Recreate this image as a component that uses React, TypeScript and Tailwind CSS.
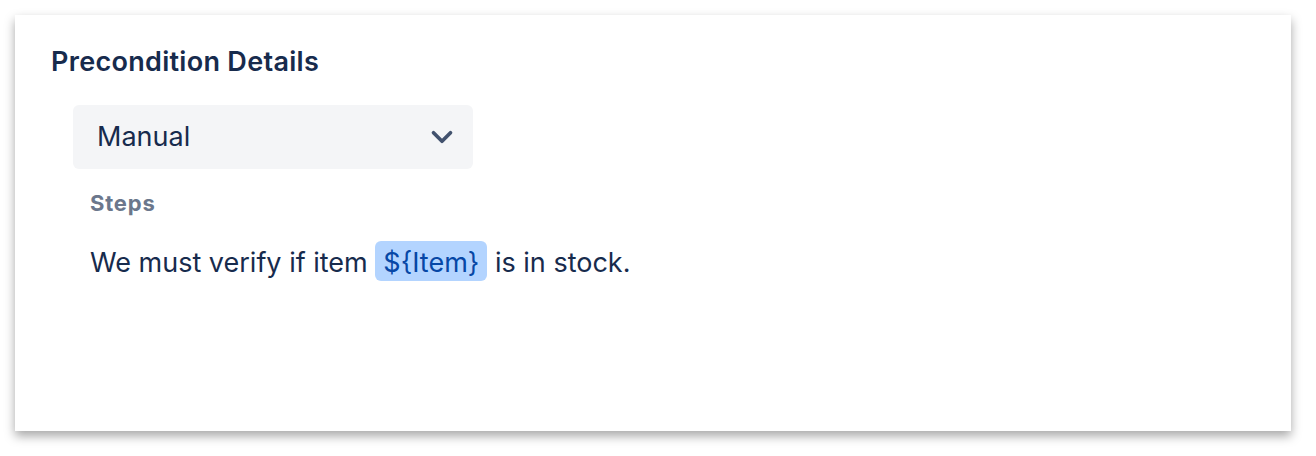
import { ChevronDown } from 'lucide-react';

export default function App() {
    return (
        <div className="w-[1316px] h-[456px] bg-white p-[15px] font-['Inter',sans-serif]">
            {/* Card */}
            <div className="w-[1276px] h-[416px] bg-white shadow-[0_5px_10px_rgba(0,0,0,0.35)] pl-[36px] pt-[30px]">
                <h2 className="text-[27px] leading-[34px] font-semibold text-[#172b4d] tracking-[0.3px]">
                    Precondition Details
                </h2>

                <div className="ml-[22px] mt-[26px]">
                    {/* Select */}
                    <div className="w-[400px] h-[64px] bg-[#f4f5f7] rounded-md flex items-center justify-between pl-[24px] pr-[14px]">
                        <span className="text-[27px] text-[#172b4d]">Manual</span>
                        <ChevronDown className="w-[34px] h-[34px] text-[#42526e]" strokeWidth={2.6} />
                    </div>

                    <div className="pl-[17px]">
                        <div className="mt-[19px] text-[22px] leading-[30px] font-bold text-[#6b778c] tracking-[0.8px]">Steps</div>
                        <p className="mt-[23px] text-[27px] leading-[40px] text-[#172b4d]">
                            We must verify if item{' '}
                            <span className="inline-block bg-[#b3d4ff] text-[#0747a6] rounded-md px-[8px] pt-[6px] pb-[2px] leading-[32px]">
                                {'${Item}'}
                            </span>{' '}
                            is in stock.
                        </p>
                    </div>
                </div>
            </div>
        </div>
    );
}
